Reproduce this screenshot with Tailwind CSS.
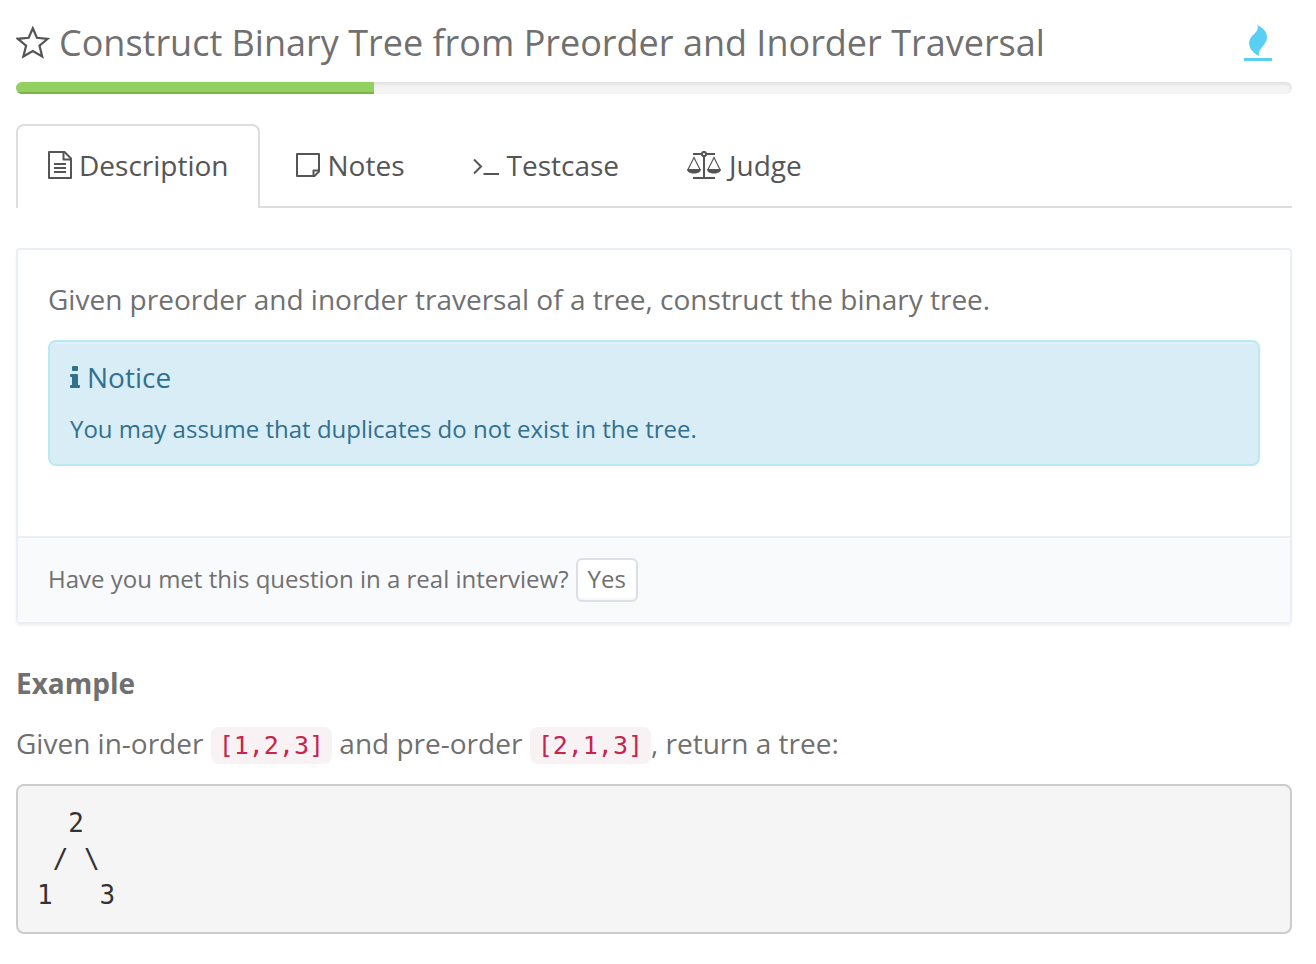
<!DOCTYPE html>
<html lang="en">
<head>
<meta charset="utf-8">
<meta name="viewport" content="width=device-width, initial-scale=1">
<title>Construct Binary Tree from Preorder and Inorder Traversal</title>
<script src="https://cdn.jsdelivr.net/npm/@tailwindcss/browser@4"></script>
</head>
<body class="bg-white font-['Open_Sans',sans-serif] text-[28px] leading-10 text-[#707070]">
<main class="px-4 pb-7 pr-6">
  <header class="flex items-center justify-between pt-4 pb-3">
    <h1 class="flex items-center gap-[9px] text-[36px] leading-[54px]">
      <button type="button" aria-label="Favorite" class="text-[#555]">
        <svg class="block h-[34px] w-[34px]" viewBox="0 0 34 34" fill="none" stroke="currentColor" stroke-width="2.2" stroke-linejoin="miter"><path d="M16.800 2.200l4.100 9.600 10.800 1-8.200 6.800 2.700 10.800-9.400-5.400-9.400 5.400 2.700-10.800L1.900 12.800l10.800-1z"/></svg>
      </button>
      <span>Construct Binary Tree from Preorder and Inorder Traversal</span>
    </h1>
    <a href="#" aria-label="LintCode" class="mr-5 text-[#5bcff3]">
      <svg class="block h-[38px] w-7" viewBox="0 0 28 38" fill="currentColor"><path d="M13.200 1C19.500 4 23.400 8 23 14.200C22.400 21 13.500 24.500 15 32C8.500 28.500 4.700 24 5.200 18C6 10.500 16.300 8.500 13.200 1z"/><path d="M0 34h28v3H0z"/></svg>
    </a>
  </header>
  <div role="progressbar" aria-label="Progress" aria-valuenow="28" aria-valuemin="0" aria-valuemax="100" class="h-3 overflow-hidden rounded-md bg-[#f5f5f5] shadow-[inset_0_2px_4px_rgba(0,0,0,0.1)]">
    <div class="h-full bg-[#93d05f] shadow-[inset_0_-2px_0_rgba(0,0,0,0.15)]" style="width:28.05%"></div>
  </div>

  <nav class="mt-[30px] flex gap-1 border-b-2 border-[#ddd] text-[#555]">
    <a href="#description" aria-current="page" class="-mb-[2px] flex items-center gap-[7px] rounded-t-lg border-2 border-b-0 border-[#ddd] bg-white pt-[19px] pr-[29px] pb-[23px] pl-[30px]">
      <svg class="h-7 w-6" viewBox="0 0 24 28" fill="none" stroke="currentColor" stroke-width="2" stroke-linejoin="round"><path d="M1 1h15.500L23 7.500V27H1z"/><path d="M15.500 1v7.500H23M6 13h12M6 17h12M6 21h12"/></svg>
      Description
    </a>
    <a href="#notes" class="flex items-center gap-2 px-8 pt-[21px] pb-[21px]">
      <svg class="h-6 w-6" viewBox="0 0 24 24" fill="none" stroke="currentColor" stroke-width="2" stroke-linejoin="round"><path d="M1 1h22v17.500L18.500 23H1z"/><path d="M17.500 23v-5.500H23"/></svg>
      Notes
    </a>
    <a href="#testcase" class="flex items-center gap-2 px-8 pt-[21px] pb-[21px]">
      <svg class="h-6 w-[26px]" viewBox="0 0 26 24" fill="none" stroke="currentColor" stroke-width="2"><path d="M1 6.500l7 7-7 7M10.500 21h15.500"/></svg>
      Testcase
    </a>
    <a href="#judge" class="flex items-center gap-2 px-8 pt-[21px] pb-[21px]">
      <svg class="h-7 w-[34px]" viewBox="0 0 34 28" fill="none" stroke="currentColor" stroke-width="2"><path d="M6 3h8.500M19.500 3H28M17 6v21M6 27h22"/><circle cx="17" cy="3" r="2.100"/><path stroke-width="1.200" d="M1 18.500L7 6.500l6 12M21 18.500l6-12 6 12"/><path fill="currentColor" stroke="none" d="M0 18h14c0 3-3 4.500-7 4.500S0 21 0 18zM20 18h14c0 3-3 4.500-7 4.500S20 21 20 18z"/></svg>
      Judge
    </a>
  </nav>

  <section id="description" class="mt-10 rounded border-2 border-[#e9eff5] shadow-[0_2px_3px_rgba(0,0,0,0.05)]">
    <div class="px-[30px] pt-[29px] pb-[70px]">
      <p>Given preorder and inorder traversal of a tree, construct the binary tree.</p>
      <div role="note" class="mt-[21px] rounded-lg border-2 border-[#bce8f1] bg-[#d9edf7] px-5 pt-[15px] pb-[18px] text-[#31708f] shadow-[inset_0_2px_0_rgba(255,255,255,0.2)]">
        <h2 class="flex items-center gap-[7px]">
          <svg class="h-[22px] w-[10px]" viewBox="0 0 10 22" fill="currentColor"><path d="M3 0h4q1 0 1 1v3q0 1-1 1H3Q2 5 2 4V1q0-1 1-1zM1 8h6q1 0 1 1v10h1q1 0 1 1v1q0 1-1 1H1q-1 0-1-1v-1q0-1 1-1h1v-8H1q-1 0-1-1V9q0-1 1-1z"/></svg>
          Notice
        </h2>
        <p class="mt-[15px] text-[24px] leading-[34px]">You may assume that duplicates do not exist in the tree.</p>
      </div>
    </div>
    <div class="flex items-center gap-[7px] border-t-2 border-[#e9eff5] bg-[#f9fafc] px-[30px] py-5 text-[24px] leading-[34px]">
      <span class="pb-[2px]">Have you met this question in a real interview?</span>
      <button type="button" class="rounded-md border-2 border-[#dcdfe8] bg-white px-[10px] pt-[2px] pb-1 shadow-[inset_0_-2px_2px_rgba(0,0,0,0.04)]">Yes</button>
    </div>
  </section>

  <section class="mt-[39px]">
    <h2 class="font-bold">Example</h2>
    <p class="mt-5">Given in-order <code class="rounded-lg bg-[#f9f2f4] px-2 py-1 font-['DejaVu_Sans_Mono',monospace] text-[25px] leading-6 text-[#c7254e]">[1,2,3]</code> and pre-order <code class="rounded-lg bg-[#f9f2f4] px-2 py-1 font-['DejaVu_Sans_Mono',monospace] text-[25px] leading-6 text-[#c7254e]">[2,1,3]</code>, return a tree:</p>
    <pre class="mt-[21px] overflow-x-auto rounded-lg border-2 border-[#ccc] bg-[#f5f5f5] px-[19px] py-[19px] font-['DejaVu_Sans_Mono',monospace] text-[26px] leading-[36px] text-[#333]">  2
 / \
1   3</pre>
  </section>
</main>
</body>
</html>
